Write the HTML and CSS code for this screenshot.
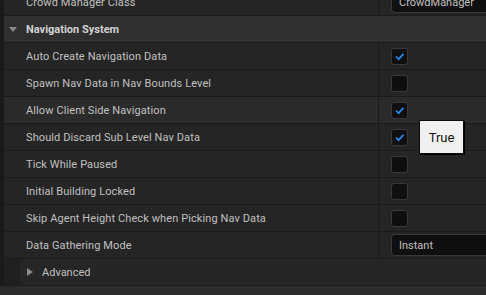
FILE: index.html
```html
<!DOCTYPE html>
<html lang="en">
<head>
  <meta charset="UTF-8" />
  <title>Navigation System</title>
  <link rel="stylesheet" href="styles.css">
</head>
<body>
  <div class="details">
    <div class="prop-row cut">
      <div class="label">Crowd Manager Class</div>
      <div class="value"><div class="combo">CrowdManager</div></div>
    </div>

    <div class="category">
      <span class="arrow-down"></span>
      <span>Navigation System</span>
    </div>

    <div class="prop-row">
      <div class="label">Auto Create Navigation Data</div>
      <div class="value"><span class="check on"><svg viewBox="0 0 17 17"><path d="M4.5 8.5 L7.5 11.5 L13 5.5" /></svg></span></div>
    </div>
    <div class="prop-row">
      <div class="label">Spawn Nav Data in Nav Bounds Level</div>
      <div class="value"><span class="check"></span></div>
    </div>
    <div class="prop-row hover">
      <div class="label">Allow Client Side Navigation</div>
      <div class="value"><span class="check on"><svg viewBox="0 0 17 17"><path d="M4.5 8.5 L7.5 11.5 L13 5.5" /></svg></span></div>
    </div>
    <div class="prop-row">
      <div class="label">Should Discard Sub Level Nav Data</div>
      <div class="value">
        <span class="check on"><svg viewBox="0 0 17 17"><path d="M4.5 8.5 L7.5 11.5 L13 5.5" /></svg></span>
        <div class="tooltip">True</div>
      </div>
    </div>
    <div class="prop-row">
      <div class="label">Tick While Paused</div>
      <div class="value"><span class="check"></span></div>
    </div>
    <div class="prop-row">
      <div class="label">Initial Building Locked</div>
      <div class="value"><span class="check"></span></div>
    </div>
    <div class="prop-row">
      <div class="label">Skip Agent Height Check when Picking Nav Data</div>
      <div class="value"><span class="check"></span></div>
    </div>
    <div class="prop-row">
      <div class="label">Data Gathering Mode</div>
      <div class="value"><div class="combo">Instant</div></div>
    </div>

    <div class="sub-group">
      <div class="indent"></div>
      <div class="sub-head">
        <span class="arrow-right"></span>
        <span>Advanced</span>
      </div>
    </div>
  </div>
  <div class="footer"></div>
</body>
</html>
```

FILE: styles.css
```css
body {
  margin: 0;
  background-color: #1a1a1a;
  font-family: Roboto, "Liberation Sans", sans-serif;
  font-size: 11px;
  color: #c0c0c0;
  overflow: hidden;
  height: 295px;
}

.details {
  margin-top: -11px;
  padding-left: 4px;
}

.prop-row {
  display: flex;
  height: 26px;
  border-bottom: 1px solid #1b1b1b;
  background-color: #252525;
}

.prop-row.hover {
  background-color: #2b2b2b;
}

.label {
  flex-shrink: 0;
  width: 352px;
  padding-left: 22px;
  display: flex;
  align-items: center;
  white-space: nowrap;
  overflow: hidden;
  border-right: 1px solid #1b1b1b;
  letter-spacing: 0.1px;
}

.value {
  flex: 1;
  min-width: 0;
  display: flex;
  align-items: center;
  padding-left: 12px;
  position: relative;
}

.category {
  display: flex;
  align-items: center;
  height: 26px;
  border-bottom: 1px solid #1b1b1b;
  background-color: #2f2f2f;
  font-weight: bold;
  color: #d2d2d2;
  padding-left: 5px;
  gap: 9px;
}

.arrow-down {
  width: 0;
  height: 0;
  border-left: 4px solid transparent;
  border-right: 4px solid transparent;
  border-top: 5px solid #8a8a8a;
}

.arrow-right {
  width: 0;
  height: 0;
  border-top: 4px solid transparent;
  border-bottom: 4px solid transparent;
  border-left: 6px solid #8a8a8a;
}

.check {
  flex-shrink: 0;
  width: 15px;
  height: 15px;
  border: 1px solid #393939;
  border-radius: 3px;
  background-color: #0f0f0f;
  display: flex;
}

.check svg {
  width: 15px;
  height: 15px;
}

.check path {
  fill: none;
  stroke: #2a86e8;
  stroke-width: 2;
}

.combo {
  width: 110px;
  height: 20px;
  border: 1px solid #383838;
  border-radius: 4px;
  background-color: #0f0f0f;
  display: flex;
  align-items: center;
  padding-left: 7px;
  flex-shrink: 0;
}

.tooltip {
  position: absolute;
  left: 40px;
  top: -4px;
  width: 43px;
  height: 32px;
  background-color: #f0f0f0;
  border: 1px solid #0a0a0a;
  box-shadow: 1px 1px 0 #000;
  color: #111;
  font-size: 13px;
  display: flex;
  align-items: center;
  justify-content: center;
  z-index: 2;
}

.sub-group {
  display: flex;
  height: 26px;
  border-bottom: 1px solid #1b1b1b;
}

.indent {
  width: 16px;
  background-color: #202020;
}

.sub-head {
  flex: 1;
  display: flex;
  align-items: center;
  gap: 9px;
  padding-left: 7px;
  background-color: #262626;
}

.footer {
  height: 20px;
  background-color: #2c2c2c;
}
```
